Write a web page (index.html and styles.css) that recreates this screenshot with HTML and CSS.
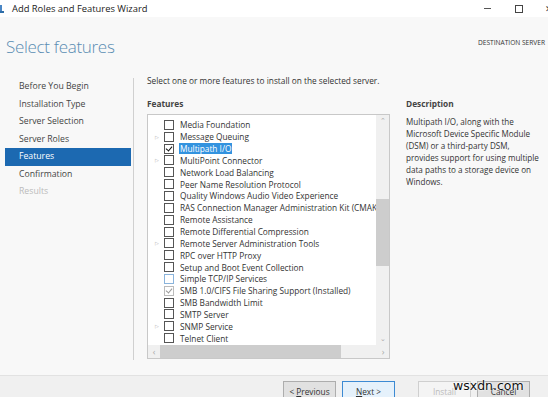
FILE: index.html
```html
<!DOCTYPE html>
<html lang="en">
<head>
    <meta charset="UTF-8">
    <title>Add Roles and Features Wizard</title>
    <link rel="stylesheet" href="styles.css">
</head>
<body>
    <div class="titlebar">
        <svg class="app-icon" width="6" height="10" viewBox="0 0 6 10">
            <rect x="0" y="1" width="3" height="8" fill="#4a86c5"/>
            <rect x="0" y="7" width="5" height="2" fill="#2f6ea8"/>
        </svg>
        <span class="title">Add Roles and Features Wizard</span>
        <div class="controls">
            <span class="min"></span>
            <span class="max"></span>
            <span class="close">✕</span>
        </div>
    </div>

    <div class="header">
        <h1>Select features</h1>
        <div class="dest">DESTINATION SERVER</div>
    </div>

    <div class="main">
        <ul class="steps">
            <li>Before You Begin</li>
            <li>Installation Type</li>
            <li>Server Selection</li>
            <li>Server Roles</li>
            <li class="active">Features</li>
            <li>Confirmation</li>
            <li class="disabled">Results</li>
        </ul>

        <div class="content">
            <p class="intro">Select one or more features to install on the selected server.</p>
            <div class="columns">
                <div class="features">
                    <div class="label">Features</div>
                    <div class="listbox">
                        <div class="list-area">
                            <ul class="items" id="items"></ul>
                            <div class="vscroll">
                                <span class="arrow">&#8963;</span>
                                <div class="track"><div class="thumb"></div></div>
                                <span class="arrow">&#8964;</span>
                            </div>
                        </div>
                        <div class="hscroll">
                            <span class="arrow">&lsaquo;</span>
                            <div class="track"><div class="thumb"></div></div>
                            <span class="arrow">&rsaquo;</span>
                        </div>
                    </div>
                </div>
                <div class="description">
                    <div class="label">Description</div>
                    <p>Multipath I/O, along with the Microsoft Device Specific Module (DSM) or a third-party DSM, provides support for using multiple data paths to a storage device on Windows.</p>
                </div>
            </div>
        </div>
    </div>

    <div class="footer">
        <button class="btn">&lt; <u>P</u>revious</button>
        <button class="btn focus"><u>N</u>ext &gt;</button>
        <button class="btn gap" disabled>Install</button>
        <button class="btn">Cancel</button>
    </div>
    <div class="watermark">wsxdn.com</div>

    <script>
        const features = [
            ['Media Foundation', false, ''],
            ['Message Queuing', true, ''],
            ['Multipath I/O', false, 'checked selected'],
            ['MultiPoint Connector', true, ''],
            ['Network Load Balancing', false, ''],
            ['Peer Name Resolution Protocol', false, ''],
            ['Quality Windows Audio Video Experience', false, ''],
            ['RAS Connection Manager Administration Kit (CMAK)', false, ''],
            ['Remote Assistance', false, ''],
            ['Remote Differential Compression', false, ''],
            ['Remote Server Administration Tools', true, ''],
            ['RPC over HTTP Proxy', false, ''],
            ['Setup and Boot Event Collection', false, ''],
            ['Simple TCP/IP Services', false, 'hover'],
            ['SMB 1.0/CIFS File Sharing Support (Installed)', false, 'installed'],
            ['SMB Bandwidth Limit', false, ''],
            ['SMTP Server', false, ''],
            ['SNMP Service', true, ''],
            ['Telnet Client', false, '']
        ];

        const list = document.getElementById('items');
        features.forEach(f => {
            const li = document.createElement('li');
            li.className = f[2];
            const exp = document.createElement('span');
            exp.className = 'expander';
            exp.textContent = f[1] ? '▷' : '';
            li.appendChild(exp);
            const box = document.createElement('span');
            box.className = 'check';
            li.appendChild(box);
            const name = document.createElement('span');
            name.className = 'name';
            name.textContent = f[0];
            li.appendChild(name);
            list.appendChild(li);
        });
    </script>
</body>
</html>
```

FILE: styles.css
```css
html, body {
    margin: 0;
    padding: 0;
}
body {
    width: 548px;
    height: 397px;
    overflow: hidden;
    background-color: #f8f8f8;
    font-family: 'Open Sans', 'Noto Sans', sans-serif;
    color: #333;
    position: relative;
}
.titlebar {
    height: 17px;
    background: #ffffff;
    display: flex;
    align-items: center;
}
.app-icon {
    margin-left: -1px;
    margin-right: 7px;
}
.title {
    font-size: 9.4px;
    color: #222;
}
.controls {
    margin-left: auto;
    display: flex;
    align-items: center;
    height: 17px;
}
.controls .min {
    width: 7px;
    height: 1px;
    background: #555;
    margin-right: 24px;
}
.controls .max {
    width: 6px;
    height: 6px;
    border: 1px solid #444;
    margin-right: 22px;
}
.controls .close {
    font-size: 9px;
    color: #444;
    width: 3px;
    overflow: hidden;
}
.header {
    height: 58px;
    display: flex;
    justify-content: space-between;
    align-items: flex-start;
}
h1 {
    margin: 18px 0 0 6px;
    font-size: 17px;
    font-weight: 300;
    color: #5a8db3;
    letter-spacing: -0.3px;
}
.dest {
    margin: 21px 3px 0 0;
    font-size: 6.6px;
    color: #333;
}
.main {
    display: flex;
    height: 300px;
}
.steps {
    list-style: none;
    margin: 3px 0 0 0;
    padding: 0;
    width: 133px;
    border-right: 1px solid #d0d0d0;
    height: 282px;
}
.steps li {
    font-size: 8.7px;
    color: #444;
    height: 17.5px;
    line-height: 17.5px;
    padding-left: 14px;
    margin-left: 5px;
    margin-right: 2px;
}
.steps li.active {
    background: #1c69b1;
    color: #fff;
}
.steps li.disabled {
    color: #bbb;
}
.content {
    padding-left: 13px;
    flex: 1;
}
.intro {
    margin: 0;
    font-size: 8.3px;
    line-height: 12px;
    color: #333;
}
.columns {
    display: flex;
    margin-top: 11px;
}
.label {
    font-size: 8.3px;
    font-weight: bold;
    color: #444;
    line-height: 12px;
}
.features {
    width: 243px;
}
.listbox {
    margin-top: 4px;
    border: 1px solid #c8c8c8;
    background: #fff;
    height: 243px;
    display: flex;
    flex-direction: column;
}
.list-area {
    flex: 1;
    display: flex;
    overflow: hidden;
}
.items {
    list-style: none;
    margin: 0;
    padding: 4px 0 0 0;
    flex: 1;
    min-width: 0;
    overflow: hidden;
}
.items li {
    height: 11.85px;
    display: flex;
    align-items: center;
    white-space: nowrap;
    font-size: 8.3px;
    color: #333;
}
.expander {
    width: 16px;
    flex-shrink: 0;
    font-size: 5px;
    color: #aaa;
    text-align: center;
    padding-left: 2px;
    box-sizing: border-box;
}
.check {
    width: 8px;
    height: 8px;
    border: 1px solid #555;
    background: #fff;
    margin-right: 6px;
    position: relative;
    flex-shrink: 0;
}
.checked .check::after,
.installed .check::after {
    content: '';
    position: absolute;
    left: 2px;
    top: 0px;
    width: 3px;
    height: 5px;
    border: solid #111;
    border-width: 0 1.5px 1.5px 0;
    transform: rotate(40deg);
}
.installed .check {
    border-color: #bbb;
}
.installed .check::after {
    border-color: #999;
}
.hover .check {
    border-color: #8ab4dc;
}
.name {
    flex-shrink: 0;
}
.selected .name {
    background: #3393df;
    color: #fff;
    padding: 0 1px;
    margin-left: -1px;
}
.vscroll {
    width: 13px;
    flex-shrink: 0;
    background: #f0f0f0;
    display: flex;
    flex-direction: column;
    align-items: center;
}
.vscroll .arrow {
    font-size: 7px;
    color: #aaa;
    height: 12px;
    line-height: 12px;
}
.vscroll .track {
    flex: 1;
    width: 100%;
}
.vscroll .thumb {
    margin-top: 72px;
    height: 67px;
    background: #cdcdcd;
}
.hscroll {
    height: 13px;
    background: #f0f0f0;
    display: flex;
    align-items: center;
}
.hscroll .arrow {
    width: 12px;
    text-align: center;
    font-size: 9px;
    color: #aaa;
}
.hscroll .track {
    flex: 1;
    height: 100%;
}
.hscroll .thumb {
    width: 181px;
    height: 100%;
    background: #cdcdcd;
}
.description {
    padding-left: 16px;
    flex: 1;
}
.description p {
    margin: 6px 0 0 0;
    max-width: 138px;
    font-size: 8.1px;
    line-height: 12px;
    color: #333;
}
.footer {
    position: absolute;
    left: 0;
    right: 0;
    top: 375px;
    bottom: 0;
    border-top: 1px solid #e2e2e2;
    background: #f0f0f0;
    display: flex;
    padding: 5px 0 0 283px;
    box-sizing: border-box;
}
.btn {
    width: 53px;
    height: 20px;
    margin-right: 6px;
    border: 1px solid #adadad;
    background: #e1e1e1;
    font-family: inherit;
    font-size: 8.3px;
    color: #333;
    padding: 0;
}
.btn.focus {
    border-color: #3c8ad3;
    background: #e5f1fb;
}
.btn.gap {
    margin-left: 17px;
}
.btn:disabled {
    color: #bbb;
    background: #f4f4f4;
    border-color: #cfcfcf;
}
.watermark {
    position: absolute;
    left: 453px;
    top: 378px;
    font-family: 'DejaVu Sans', sans-serif;
    font-size: 12.5px;
    color: #111;
    text-shadow: 0 0 2px #fff, 0 0 2px #fff;
}
```
